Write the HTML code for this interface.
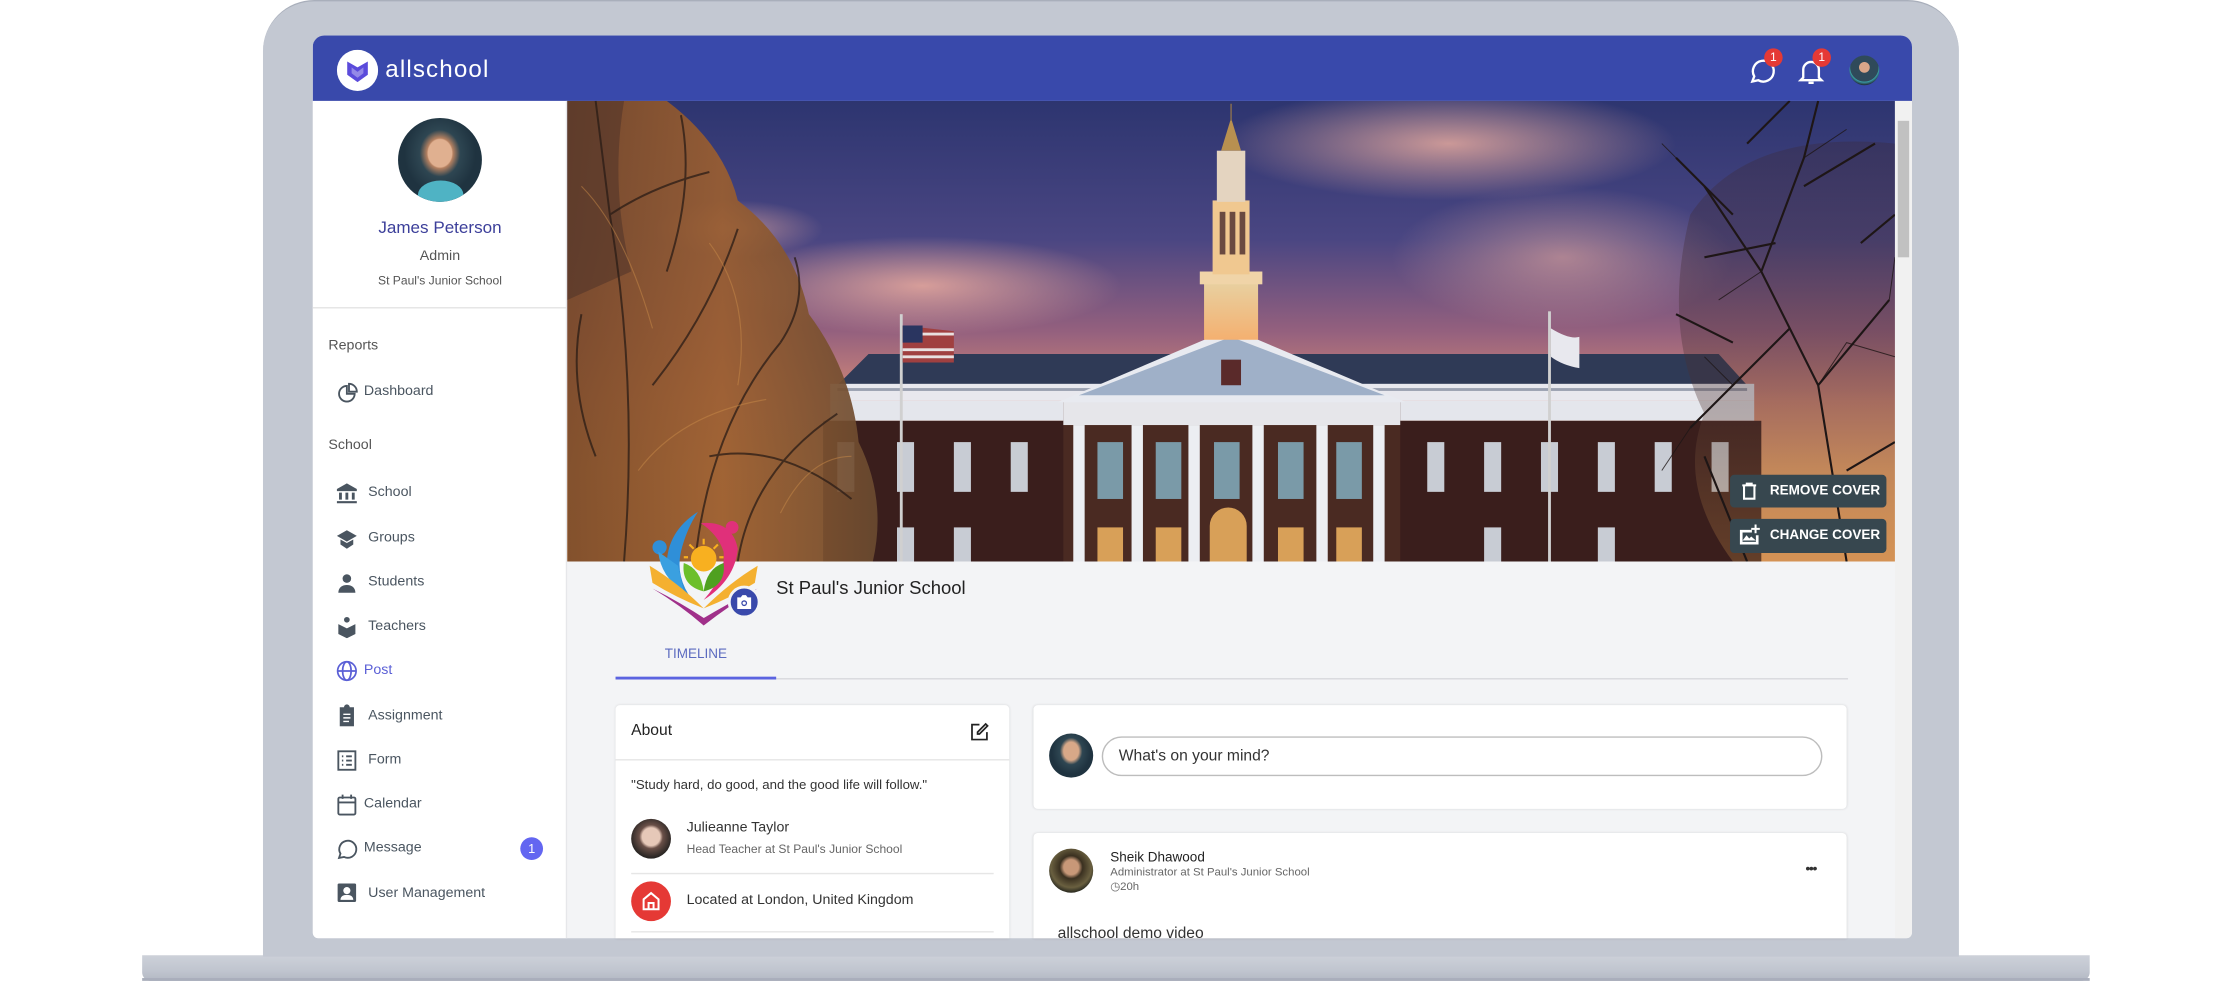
<!DOCTYPE html>
<html><head><meta charset="utf-8"><style>
*{margin:0;padding:0;box-sizing:border-box}
html,body{width:2229px;height:987px;overflow:hidden;background:#fff}
#w{position:absolute;left:0;top:0;width:1568px;height:694px;transform:scale(1.42156);transform-origin:0 0;font-family:"Liberation Sans",sans-serif}
.a{position:absolute}
.nav{position:absolute;left:256px;font-size:10px;color:#4a5560;white-space:nowrap}
.ic{position:absolute;left:236px;width:16px;height:16px}
</style></head><body><div id="w">
<!-- base -->
<div class="a" style="left:100px;top:672px;width:1370px;height:18px;background:linear-gradient(#cdd1d9,#c0c5cf 60%,#b3b8c3);border-radius:0 0 6px 6px"></div>
<div class="a" style="left:100px;top:688px;width:1370px;height:2px;background:#a9aebb"></div>
<!-- frame -->
<div class="a" style="left:185px;top:0;width:1193px;height:673px;background:#c3c8d2;border-radius:36px 36px 0 0;border-top:1px solid #a9afbb"></div>
<!-- screen -->
<div class="a" style="left:220px;top:25px;width:1125px;height:635px;background:#f3f4f6;border-radius:8px 8px 4px 4px;overflow:hidden">
 <div class="a" style="left:0;top:0;width:1125px;height:46px;background:#3949ab"></div>
 <div class="a" style="left:0;top:46px;width:179px;height:589px;background:#fff;border-right:1px solid #e6e7ea"></div>
 <div class="a" style="left:1113px;top:46px;width:12px;height:589px;background:#f1f1f1"></div>
 <div class="a" style="left:1115px;top:60px;width:8px;height:96px;background:#c1c1c1"></div>
</div>
<!-- header -->
<svg class="a" style="left:237px;top:35px" width="29" height="29" viewBox="0 0 28 28"><circle cx="14" cy="14" r="14" fill="#fff"/><path d="M7 8 L14 12 L21 8 L21 17 L14 22 L7 17Z" fill="#5b4bdb"/><path d="M10 12 L14 15 L18 12 L18 16 L14 19 L10 16Z" fill="#fff" opacity=".35"/></svg>
<div class="a" style="left:271px;top:39px;font-size:17px;color:#fff;letter-spacing:.8px">allschool</div>
<svg class="a" style="left:1229px;top:39px" width="22" height="22" viewBox="0 0 24 24" fill="none" stroke="#fff" stroke-width="1.8"><path d="M4 20l1.5-4A8 8 0 1 1 8.5 19Z"/></svg>
<div class="a" style="left:1241px;top:34px;width:13px;height:13px;border-radius:50%;background:#e53935;color:#fff;font-size:8.5px;text-align:center;line-height:13px">1</div>
<svg class="a" style="left:1263px;top:39px" width="22" height="22" viewBox="0 0 24 24" fill="none" stroke="#fff" stroke-width="1.8"><path d="M6 17V11a6 6 0 0 1 12 0v6l2 2H4z M10 21h4"/></svg>
<div class="a" style="left:1275px;top:34px;width:13px;height:13px;border-radius:50%;background:#e53935;color:#fff;font-size:8.5px;text-align:center;line-height:13px">1</div>
<div class="a" style="left:1301px;top:39px;width:21px;height:21px;border-radius:50%;background:radial-gradient(circle at 50% 40%,#d9a68a 0 22%,#2f4a5a 24% 60%,#3aa0a8 62%,#24313c 75%)"></div>
<!-- sidebar -->
<div class="a" style="left:280px;top:83px;width:59px;height:59px;border-radius:50%;background:radial-gradient(ellipse at 50% 42%,#e0b090 0 20%,#b48060 22%,#2e4652 34%,#1f3340 60%);overflow:hidden"><div class="a" style="left:14px;top:44px;width:32px;height:20px;border-radius:50% 50% 0 0;background:#4fb3c4"></div></div>
<div class="a" style="left:220px;width:179px;top:153px;text-align:center;font-size:12px;color:#3c3f9a">James Peterson</div>
<div class="a" style="left:220px;width:179px;top:175px;text-align:center;font-size:10px;color:#555">Admin</div>
<div class="a" style="left:220px;width:179px;top:192px;text-align:center;font-size:8.5px;color:#555">St Paul's Junior School</div>
<div class="a" style="left:220px;top:216px;width:179px;height:1px;background:#e4e4e4"></div>
<div class="a" style="left:231px;top:238px;font-size:10px;color:#555">Reports</div>
<svg class="ic" style="top:269px" viewBox="0 0 16 16" fill="none" stroke="#4a5560" stroke-width="1.3"><path d="M8 2.5A5.5 5.5 0 1 0 13.5 8H8z"/><path d="M9.5 1v5.5H15A5.5 5.5 0 0 0 9.5 1z"/></svg>
<div class="nav" style="top:270px">Dashboard</div>
<div class="a" style="left:231px;top:308px;font-size:10px;color:#555">School</div>
<svg class="ic" style="top:339px" viewBox="0 0 16 16" fill="#4a5560"><path d="M8 1L1 5v1.5h14V5z M2.5 7.5h2v5h-2z M7 7.5h2v5H7z M11.5 7.5h2v5h-2z M1 13.5h14V15H1z"/></svg>
<div class="nav" style="left:259px;top:341px">School</div>
<svg class="ic" style="top:371px" viewBox="0 0 16 16" fill="#4a5560"><path d="M8 2L1 6l7 4 7-4z M3.5 8.5v3.5L8 15l4.5-3V8.5L8 11z"/></svg>
<div class="nav" style="left:259px;top:373px">Groups</div>
<svg class="ic" style="top:402px" viewBox="0 0 16 16" fill="#4a5560"><circle cx="8" cy="5" r="3"/><path d="M2 15c0-4 3-5.5 6-5.5s6 1.5 6 5.5z"/></svg>
<div class="nav" style="left:259px;top:404px">Students</div>
<svg class="ic" style="top:433px" viewBox="0 0 16 16" fill="#4a5560"><circle cx="8" cy="3" r="2"/><path d="M2 6l6 3 6-3v7l-6 3-6-3z"/></svg>
<div class="nav" style="left:259px;top:435px">Teachers</div>
<svg class="ic" style="top:464px" viewBox="0 0 16 16" fill="none" stroke="#5a5fd6" stroke-width="1.2"><circle cx="8" cy="8" r="6.5"/><ellipse cx="8" cy="8" rx="3" ry="6.5"/><path d="M1.5 8h13"/></svg>
<div class="nav" style="top:466px;color:#5a5fd6">Post</div>
<svg class="ic" style="top:495px" viewBox="0 0 16 16" fill="#4a5560"><path d="M3 2.5h3a2 2 0 0 1 4 0h3V16H3z"/><path d="M5.5 7h5v1h-5zm0 2.5h5v1h-5zm0 2.5h4v1h-4z" fill="#fff"/></svg>
<div class="nav" style="left:259px;top:498px">Assignment</div>
<svg class="ic" style="top:527px" viewBox="0 0 16 16" fill="none" stroke="#4a5560" stroke-width="1.3"><rect x="2" y="1.5" width="12" height="13"/><path d="M4.5 5h1m2 0h4M4.5 8h1m2 0h4M4.5 11h1m2 0h4"/></svg>
<div class="nav" style="left:259px;top:529px">Form</div>
<svg class="ic" style="top:558px" viewBox="0 0 16 16" fill="none" stroke="#4a5560" stroke-width="1.3"><rect x="2" y="3" width="12" height="12" rx="1"/><path d="M2 6.5h12M5 1v3m6-3v3"/></svg>
<div class="nav" style="top:560px">Calendar</div>
<svg class="ic" style="top:589px" viewBox="0 0 16 16" fill="none" stroke="#4a5560" stroke-width="1.3"><path d="M2.5 14.5l1-3A6 6 0 1 1 6 13.8z"/></svg>
<div class="nav" style="top:591px">Message</div>
<div class="a" style="left:366px;top:589px;width:16px;height:16px;border-radius:50%;background:#6366f1;color:#fff;font-size:9px;text-align:center;line-height:16px">1</div>
<svg class="ic" style="top:620px" viewBox="0 0 16 16" fill="#4a5560"><rect x="1.5" y="1.5" width="13" height="13" rx="1"/><circle cx="8" cy="6.5" r="2.5" fill="#fff"/><path d="M3.5 13c0-2.5 2-3.5 4.5-3.5s4.5 1 4.5 3.5z" fill="#fff"/></svg>
<div class="nav" style="left:259px;top:623px">User Management</div>
<!-- cover -->
<svg class="a" style="left:399px;top:71px" width="934" height="324" viewBox="0 0 934 324">
<defs>
<linearGradient id="sky" x1="0" y1="0" x2="0" y2="1"><stop offset="0" stop-color="#2d3570"/><stop offset=".3" stop-color="#4a4682"/><stop offset=".5" stop-color="#94607e"/><stop offset=".65" stop-color="#d48a78"/><stop offset=".8" stop-color="#eaa46c"/><stop offset="1" stop-color="#e8a060"/></linearGradient>
<radialGradient id="cl" cx=".5" cy=".5" r=".5"><stop offset="0" stop-color="#f0b0a0" stop-opacity=".8"/><stop offset="1" stop-color="#f0b0a0" stop-opacity="0"/></radialGradient>
<linearGradient id="lt" x1="0" y1="0" x2="1" y2="0"><stop offset="0" stop-color="#7a4a28"/><stop offset=".5" stop-color="#9a5e30"/><stop offset="1" stop-color="#6a4a30"/></linearGradient>
<linearGradient id="rt" x1="0" y1="0" x2="0" y2="1"><stop offset="0" stop-color="#3a2a3a"/><stop offset=".6" stop-color="#4a3030"/><stop offset="1" stop-color="#b07a40"/></linearGradient>
<linearGradient id="tw" x1="0" y1="0" x2="0" y2="1"><stop offset="0" stop-color="#e8d0a0"/><stop offset="1" stop-color="#f4b070"/></linearGradient>
</defs>
<rect width="934" height="324" fill="url(#sky)"/>
<ellipse cx="620" cy="30" rx="160" ry="40" fill="url(#cl)"/>
<ellipse cx="250" cy="130" rx="140" ry="35" fill="url(#cl)"/>
<ellipse cx="700" cy="110" rx="120" ry="50" fill="url(#cl)" opacity=".7"/>
<ellipse cx="120" cy="90" rx="60" ry="20" fill="url(#cl)" opacity=".7"/>
<!-- roof -->
<path d="M190 200 L212 178 L810 178 L830 200Z" fill="#2f3a56"/>
<rect x="185" y="199" width="650" height="12" fill="#e8e8ee"/>
<g fill="#9aa0b0"><rect x="190" y="202" width="640" height="2"/></g>
<rect x="185" y="211" width="650" height="14" fill="#e4e6ec"/>
<rect x="180" y="225" width="660" height="99" fill="#3a1e1c"/>
<g fill="#c8ccd4">
<rect x="190" y="240" width="12" height="35"/><rect x="232" y="240" width="12" height="35"/><rect x="272" y="240" width="12" height="35"/><rect x="312" y="240" width="12" height="35"/>
<rect x="605" y="240" width="12" height="35"/><rect x="645" y="240" width="12" height="35"/><rect x="685" y="240" width="12" height="35"/><rect x="725" y="240" width="12" height="35"/><rect x="765" y="240" width="12" height="35"/><rect x="805" y="240" width="12" height="35"/>
<rect x="232" y="300" width="12" height="24"/><rect x="272" y="300" width="12" height="24"/><rect x="645" y="300" width="12" height="24"/><rect x="725" y="300" width="12" height="24"/>
</g>
<rect x="349" y="211" width="237" height="113" fill="#4a2a22"/>
<rect x="349" y="211" width="237" height="17" fill="#e6e6ea"/>
<g fill="#d8a058"><rect x="373" y="240" width="18" height="40" fill="#7a9aa8"/><rect x="414" y="240" width="18" height="40" fill="#7a9aa8"/><rect x="455" y="240" width="18" height="40" fill="#7a9aa8"/><rect x="500" y="240" width="18" height="40" fill="#7a9aa8"/><rect x="541" y="240" width="18" height="40" fill="#7a9aa8"/>
<rect x="373" y="300" width="18" height="24"/><rect x="414" y="300" width="18" height="24"/><path d="M452 324v-25a13 13 0 0 1 26 0v25z"/><rect x="500" y="300" width="18" height="24"/><rect x="541" y="300" width="18" height="24"/></g>
<g fill="#eceef2"><rect x="356" y="228" width="8" height="96"/><rect x="397" y="228" width="8" height="96"/><rect x="437" y="228" width="8" height="96"/><rect x="482" y="228" width="8" height="96"/><rect x="527" y="228" width="8" height="96"/><rect x="567" y="228" width="8" height="96"/></g>
<path d="M345 212 L467 160 L590 212Z" fill="#e8eaf0"/>
<path d="M360 207 L467 166 L575 207Z" fill="#9fb0c8"/>
<rect x="460" y="182" width="14" height="18" fill="#5a2a2a"/>
<!-- tower -->
<rect x="448" y="128" width="38" height="40" fill="url(#tw)"/>
<rect x="445" y="120" width="44" height="9" fill="#f0d4a8"/>
<rect x="454" y="70" width="26" height="52" fill="#f0c890"/>
<rect x="459" y="78" width="4" height="30" fill="#6a4a40"/><rect x="466" y="78" width="4" height="30" fill="#6a4a40"/><rect x="473" y="78" width="4" height="30" fill="#6a4a40"/>
<rect x="457" y="35" width="20" height="36" fill="#e4d4c0"/>
<path d="M460 35 L467 12 L474 35Z" fill="#b89050"/>
<rect x="466.5" y="2" width="1" height="12" fill="#8a7050"/>
<!-- flags -->
<rect x="234" y="150" width="2" height="174" fill="#d0d0d0"/>
<path d="M236 158 L272 162 L272 184 L236 184Z" fill="#a04040"/><path d="M236 158h14v12h-14z" fill="#2a3560"/><g fill="#e8e0e0"><rect x="250" y="163" width="22" height="2"/><rect x="236" y="174" width="36" height="2"/><rect x="236" y="179" width="36" height="2"/></g>
<rect x="690" y="148" width="2" height="176" fill="#d0d0d0"/>
<path d="M692 160 Q705 168 712 166 L712 188 Q700 186 692 180Z" fill="#e8e8ee"/>
<!-- left tree -->
<path d="M0 0 L70 0 Q110 30 120 70 Q160 100 170 150 Q200 190 205 240 Q225 280 215 324 L0 324Z" fill="url(#lt)" opacity=".92"/>
<path d="M0 0 L40 0 Q30 60 45 120 L0 140Z" fill="#4a3028" opacity=".5"/>
<g stroke="#2a1c16" stroke-width="1.4" fill="none" opacity=".75"><path d="M40 324 Q50 200 30 80 L20 0"/><path d="M90 324 Q100 230 150 170"/><path d="M60 200 Q100 150 120 90"/><path d="M20 250 Q0 200 10 150"/><path d="M120 324 Q130 260 190 220"/><path d="M70 120 Q90 60 80 10"/><path d="M30 80 Q60 60 100 50"/><path d="M150 170 Q170 140 160 110"/><path d="M100 250 Q150 240 200 280"/></g>
<g stroke="#c88a48" stroke-width=".8" fill="none" opacity=".5"><path d="M10 60 Q40 90 60 160"/><path d="M100 100 Q130 140 120 200"/><path d="M50 260 Q80 220 140 210"/><path d="M150 290 Q170 250 200 250"/></g>
<!-- right tree -->
<path d="M790 80 Q830 20 934 30 L934 324 L820 324 Q780 270 800 220 Q770 160 790 80Z" fill="url(#rt)" opacity=".35"/>
<g stroke="#1e1616" stroke-width="1.5" fill="none"><path d="M900 324 L880 200 L840 120 L800 60"/><path d="M880 200 L930 140"/><path d="M860 160 L820 200 L790 230"/><path d="M840 120 L870 40 L880 0"/><path d="M900 260 L934 240"/><path d="M850 100 L800 110"/><path d="M870 60 L920 30"/><path d="M820 80 L780 40"/><path d="M800 250 L830 324"/><path d="M910 100 L934 80"/><path d="M830 30 L860 0"/><path d="M780 150 L820 170"/></g>
<g stroke="#1e1616" stroke-width=".7" fill="none" opacity=".8"><path d="M800 60 L770 30"/><path d="M930 140 L934 110"/><path d="M820 200 L800 180"/><path d="M870 40 L900 20"/><path d="M790 230 L770 260"/><path d="M880 200 L900 170 L934 180"/><path d="M840 120 L810 140"/></g>
</svg>
<!-- cover buttons -->
<div class="a" style="left:1217px;top:334px;width:110px;height:23px;background:#37474f;border-radius:3px;color:#fff;font-size:9.5px;font-weight:bold;line-height:23px;padding-left:28px">REMOVE COVER</div>
<svg class="a" style="left:1224px;top:339px" width="13" height="13" viewBox="0 0 16 16" fill="none" stroke="#fff" stroke-width="1.8"><path d="M2 3h12M5 1.5h6M3.5 3.5v11h9v-11"/></svg>
<div class="a" style="left:1217px;top:365px;width:110px;height:24px;background:#37474f;border-radius:3px;color:#fff;font-size:9.5px;font-weight:bold;line-height:24px;padding-left:28px">CHANGE COVER</div>
<svg class="a" style="left:1223px;top:369px" width="15" height="15" viewBox="0 0 16 16" fill="#fff"><path d="M1 4h9v2H3v7h10V8h2v7H1z M3 12l3-4 2 2.5 1.5-1.5L13 12z M12 0h1.5v2.5H16V4h-2.5v2.5H12V4H9.5V2.5H12z"/></svg>
<!-- school logo -->
<svg class="a" style="left:455px;top:358px" width="82" height="86" viewBox="0 0 82 86">
<path d="M36 2 Q14 16 14 40 Q16 58 32 64 Q20 48 24 30 Q28 14 36 2Z" fill="#2f8fd8"/>
<circle cx="9" cy="27" r="5" fill="#2f8fd8"/>
<path d="M8 30 Q10 48 26 58 L22 40Z" fill="#3aa0e0"/>
<path d="M38 10 Q60 8 64 28 Q62 50 40 64 Q56 46 54 30 Q50 18 38 10Z" fill="#e0307a"/>
<circle cx="60" cy="13" r="4.5" fill="#e0307a"/>
<circle cx="40" cy="35" r="9" fill="#f8b020"/>
<g stroke="#f8b020" stroke-width="1.5"><path d="M40 21v4M30 25l3 3M50 25l-3 3M26 34h3M51 34h3"/></g>
<path d="M40 58 Q24 54 26 38 Q38 42 40 58Z" fill="#6cbf2a"/><path d="M40 58 Q56 54 54 38 Q42 42 40 58Z" fill="#4fa020"/>
<path d="M2 40 Q22 52 40 70 Q20 62 4 52Z" fill="#f4b030"/>
<path d="M78 40 Q58 52 40 70 Q60 62 76 52Z" fill="#f4b030"/>
<path d="M4 56 Q24 68 40 82 L42 78 Q24 66 4 56Z" fill="#a0308a"/>
<path d="M78 56 Q58 68 40 82 L38 78 Q58 66 78 56Z" fill="#a0308a"/>
</svg>
<div class="a" style="left:512px;top:412px;width:23px;height:23px;border-radius:50%;background:#3949ab;border:2px solid #f3f4f6"></div>
<svg class="a" style="left:517px;top:417px" width="13" height="13" viewBox="0 0 16 16" fill="#fff"><path d="M2 4h3l1.5-2h3L11 4h3v10H2z"/><circle cx="8" cy="9" r="2.5" fill="#3949ab"/><circle cx="8" cy="9" r="1.4" fill="#fff"/></svg>
<div class="a" style="left:546px;top:406px;font-size:13px;color:#222">St Paul's Junior School</div>
<!-- tabs -->
<div class="a" style="left:433px;width:113px;top:455px;text-align:center;font-size:9.5px;color:#5c6bc0">TIMELINE</div>
<div class="a" style="left:433px;top:477px;width:867px;height:1px;background:#d8d9dd"></div>
<div class="a" style="left:433px;top:476px;width:113px;height:2px;background:#5b63e0"></div>
<!-- about card -->
<div class="a" style="left:433px;top:496px;width:277px;height:164px;background:#fff;border-radius:3px 3px 0 0;box-shadow:0 0 2px rgba(0,0,0,.12)"></div>
<div class="a" style="left:444px;top:508px;font-size:11px;color:#222">About</div>
<svg class="a" style="left:682px;top:508px" width="14" height="14" viewBox="0 0 16 16" fill="none" stroke="#222" stroke-width="1.4"><path d="M8 2H2v12h12V8"/><path d="M13 1.5l1.5 1.5L8 9.5H6.5V8z"/></svg>
<div class="a" style="left:433px;top:534px;width:277px;height:1px;background:#e6e6e6"></div>
<div class="a" style="left:444px;top:547px;font-size:9.3px;color:#333">"Study hard, do good, and the good life will follow."</div>
<div class="a" style="left:444px;top:576px;width:28px;height:28px;border-radius:50%;background:radial-gradient(circle at 50% 45%,#e6c8b8 0 30%,#6a5048 40%,#2a2624 70%)"></div>
<div class="a" style="left:483px;top:577px;font-size:10px;color:#333">Julieanne Taylor</div>
<div class="a" style="left:483px;top:592px;font-size:8.5px;color:#666">Head Teacher at St Paul's Junior School</div>
<div class="a" style="left:444px;top:614px;width:255px;height:1px;background:#e6e6e6"></div>
<div class="a" style="left:444px;top:620px;width:28px;height:28px;border-radius:50%;background:#e53935"></div>
<svg class="a" style="left:451px;top:626px" width="14" height="15" viewBox="0 0 16 16" fill="none" stroke="#fff" stroke-width="1.6"><path d="M2 7L8 2l6 5v8H2z M6 15v-5h4v5"/></svg>
<div class="a" style="left:483px;top:628px;font-size:10px;color:#333">Located at London, United Kingdom</div>
<div class="a" style="left:444px;top:655px;width:255px;height:1px;background:#e6e6e6"></div>
<!-- mind card -->
<div class="a" style="left:727px;top:496px;width:572px;height:73px;background:#fff;border-radius:3px;box-shadow:0 0 2px rgba(0,0,0,.12)"></div>
<div class="a" style="left:738px;top:516px;width:31px;height:31px;border-radius:50%;background:radial-gradient(ellipse at 50% 40%,#d8a888 0 24%,#2e4652 36%,#1f3340 62%)"></div>
<div class="a" style="left:775px;top:518px;width:507px;height:28px;border:1px solid #bdbdbd;border-radius:14px;font-size:11px;color:#333;line-height:26px;padding-left:11px">What's on your mind?</div>
<!-- post card -->
<div class="a" style="left:727px;top:586px;width:572px;height:74px;background:#fff;border-radius:3px 3px 0 0;box-shadow:0 0 2px rgba(0,0,0,.12)"></div>
<div class="a" style="left:738px;top:597px;width:31px;height:31px;border-radius:50%;background:radial-gradient(circle at 50% 42%,#c89878 0 22%,#3a3020 34%,#6a6040 60%,#2a2a20 75%)"></div>
<div class="a" style="left:781px;top:598px;font-size:9.5px;color:#222">Sheik Dhawood</div>
<div class="a" style="left:781px;top:609px;font-size:8px;color:#666">Administrator at St Paul's Junior School</div>
<div class="a" style="left:781px;top:619px;font-size:8px;color:#666">◷20h</div>
<div class="a" style="left:1270px;top:606px;font-size:10px;color:#333;letter-spacing:-1px">•••</div>
<div class="a" style="left:744px;top:651px;font-size:11px;color:#333;height:9px;overflow:hidden">allschool demo video</div>
</div></body></html>
